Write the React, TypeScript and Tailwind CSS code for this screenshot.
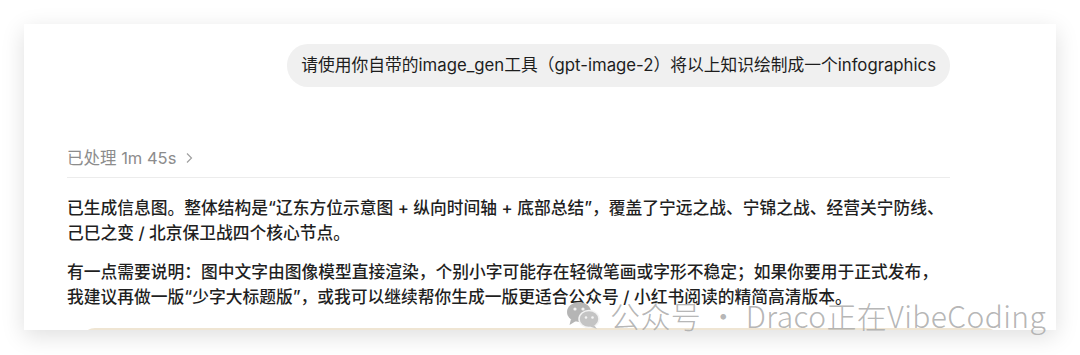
import React from "react";

const FONT = { fontFamily: 'Inter, "Noto Sans CJK SC", "Noto Sans", sans-serif' };

function WeChatMark() {
  return (
    <svg width="34" height="30" viewBox="0 0 34 30" className="shrink-0">
      <ellipse cx="13" cy="12" rx="12" ry="10" fill="#b5b5b5" />
      <path d="M5 19 L3.5 25 L10 21 Z" fill="#b5b5b5" />
      <circle cx="9" cy="9" r="1.6" fill="#f4f4f4" />
      <circle cx="17" cy="9" r="1.6" fill="#f4f4f4" />
      <ellipse cx="23" cy="19" rx="10" ry="8.5" fill="#c4c4c4" stroke="#f4f4f4" strokeWidth="1.5" />
      <path d="M28 25 L31 29 L24 26.5 Z" fill="#c4c4c4" />
      <circle cx="20" cy="17.5" r="1.3" fill="#f4f4f4" />
      <circle cx="26.5" cy="17.5" r="1.3" fill="#f4f4f4" />
    </svg>
  );
}

export default function App() {
  return (
    <div className="relative w-[1080px] h-[355px] bg-white overflow-hidden" style={FONT}>
      <div className="pl-[24px] pt-[24px]">
        {/* Chat card */}
        <div className="relative w-[1032px] h-[306px] bg-white overflow-hidden shadow-[0_6px_22px_rgba(0,0,0,0.13)]">
          <div className="pt-[20px] pl-[43px] pr-[106px]">
            {/* User bubble */}
            <div className="flex justify-end">
              <div className="h-[43px] flex items-center px-[14px] rounded-[21px] bg-[#f0f0f0] text-[16.75px] text-[#1d1d1d]">
                请使用你自带的image_gen工具（gpt-image-2）将以上知识绘制成一个infographics
              </div>
            </div>

            {/* Processed header */}
            <div className="mt-[59px] h-[24px] flex items-center gap-[8px] text-[16.5px] text-[#8c8c8c]">
              <span>已处理 1m 45s</span>
              <svg width="10" height="12" viewBox="0 0 10 12">
                <path d="M3 1.5 L7.5 6 L3 10.5" fill="none" stroke="#a0a0a0" strokeWidth="1.2" />
              </svg>
            </div>
            <div className="mt-[7px] h-px bg-[#ececec]" />

            {/* Answer */}
            <p className="mt-[18px] text-[16.75px] leading-[25px] font-medium text-[#1f1f1f]">
              已生成信息图。整体结构是“辽东方位示意图 + 纵向时间轴 + 底部总结”，覆盖了宁远之战、宁锦之战、经营关宁防线、己巳之变 / 北京保卫战四个核心节点。
            </p>
            <p className="mt-[14px] text-[16.75px] leading-[25px] font-medium text-[#1f1f1f]">
              有一点需要说明：图中文字由图像模型直接渲染，个别小字可能存在轻微笔画或字形不稳定；如果你要用于正式发布，我建议再做一版“少字大标题版”，或我可以继续帮你生成一版更适合公众号 / 小红书阅读的精简高清版本。
            </p>

            {/* Top of generated image */}
            <div className="mt-[18px] ml-[14px] mr-[-50px] h-[40px] rounded-t-[14px] bg-[#efe5d3]" />
          </div>
        </div>
      </div>

      {/* Watermark */}
      <div className="absolute left-[566px] top-[298px] flex items-center gap-[10px] text-[30px] leading-[34px] tracking-[0.4px] text-[#adadad]/90"
           style={{ fontFamily: '"Noto Sans CJK SC", "Noto Sans", sans-serif', fontWeight: 300 }}>
        <WeChatMark />
        <span>公众号 · Draco正在VibeCoding</span>
      </div>
    </div>
  );
}
